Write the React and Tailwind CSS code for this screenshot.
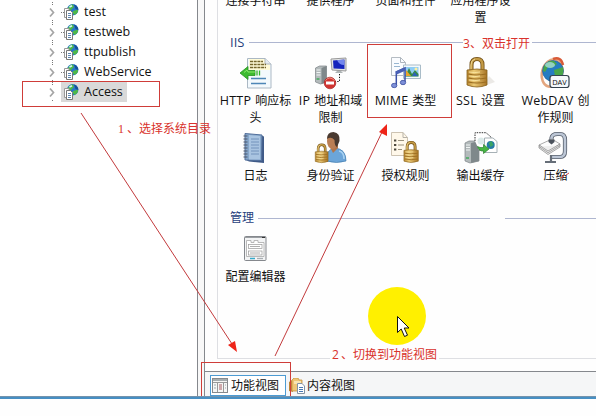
import React from "react";

function SiteIcon() {
  return (
    <svg width="16" height="16" viewBox="0 0 16 16" className="shrink-0">
      <circle cx="8.700" cy="5.700" r="5.700" fill="#2878c8" />
      <path d="M4 4Q6 0 9 .5L10 3L7 6L4 6ZM9 7L14 5.500Q14.500 9 10.500 11L9 9Z" fill="#4db848" />
      <path d="M10 .5Q14.500 2.500 14.300 6L11.500 5Z" fill="#164f96" />
      <path d="M5.500 3L8 1.800" stroke="#d6f2ff" strokeWidth="1.600" />
      <path d="M.5 4.500H5V13.500H.500Z" fill="#fff" stroke="#9a9a9a" />
      <path d="M2.500 6.500H6.500L8.500 8.500V15.500H2.500Z" fill="#fff" stroke="#777" />
      <path d="M4 9.500H7M4 11.500H7M4 13.500H7" stroke="#5f86b0" />
    </svg>
  );
}

function Gold({ x, y, s }) {
  return (
    <g transform={`translate(${x} ${y}) scale(${s})`}>
      <path d="M6.500 15V8Q6.500 2 12 2Q17.500 2 17.500 8V15" fill="none" stroke="#6f4d14" strokeWidth="4" />
      <path d="M6.500 15V8Q6.500 2 12 2Q17.500 2 17.500 8V15" fill="none" stroke="#c39a45" strokeWidth="2.400" />
      <path d="M6 14V8Q6 3 10 2" fill="none" stroke="#f0d78e" strokeWidth="1" />
      <path d="M2 13Q12 11 22 13V28Q12 32 2 28Z" fill="url(#gold)" stroke="#86601b" strokeWidth=".8" />
      <path d="M3 17Q12 19 21 17M3 21Q12 23 21 21M3 25Q12 27 21 25" fill="none" stroke="#9a6c20" strokeWidth="1.200" />
      <path d="M4 15Q10 16 15 15M4 19Q10 20 15 19M4 23Q10 24 15 23" fill="none" stroke="#fae5a0" strokeWidth="1" />
    </g>
  );
}

function Server({ x, y, w = 10, h = 20 }) {
  return (
    <g transform={`translate(${x} ${y})`}>
      <path d={`M0 2L4 0H${w}V${h - 2}L5 ${h}L0 ${h - 2}Z`} fill="#b3babb" stroke="#7c8386" strokeWidth=".7" />
      <path d={`M6 2L${w} 0V${h - 2}L6 ${h}Z`} fill="#7f888b" />
      <path d="M1 4H5M1 6.500H5M1 9H5" stroke="#f0f4f4" />
      <path d={`M1 ${h - 5}H4`} stroke="#43a95b" strokeWidth="1.500" />
    </g>
  );
}

const art = {
  http: (
    <>
      <path d="M7.500 1.500H25L31 7V31H7.500Z" fill="#f3f9fd" stroke="#abb8c4" />
      <path d="M9 2H24L30 8V13H9Z" fill="#fffbd8" />
      <path d="M25 1.500V7H31" fill="#e5ebf0" stroke="#aeb7be" />
      <path d="M10 4.500H23M10 7.500H26M10 10.500H26" stroke="#75662c" strokeWidth="1.400" strokeDasharray="3 .7" />
      <path d="M0 16L8 9.500V13.500H15V18.500H8V22.500Z" fill="#3dbb2f" stroke="#26911e" strokeWidth=".8" />
      <path d="M4 15.500L7 13L8 15H15" stroke="#8ae969" fill="none" />
      <path d="M17 13.500V18.500M19.500 13.500V18.500" stroke="#37b52c" strokeWidth="1.300" />
      <path d="M11 21.500H26M11 26.500H26" stroke="#4d86b7" strokeWidth="1.300" />
    </>
  ),
  ip: (
    <>
      <Server x={0.5} y={9} w={11} h={18} />
      <path d="M16 2L31 1V14L17 13Z" fill="#e3e5e5" stroke="#999" />
      <path d="M18 3.500L29.500 2.500V12L18.500 11.500Z" fill="#1424bd" />
      <path d="M22 3L29 3V8Q24 8 22 3Z" fill="#7286ed" />
      <path d="M22 14H26L28 16H20Z" fill="#aeb4b5" />
      <path d="M24.500 17V24.500H20" fill="none" stroke="#111" strokeDasharray="1.300 1.500" />
      <circle cx="15" cy="26" r="5.800" fill="#d13431" stroke="#a92826" strokeWidth=".7" />
      <path d="M10.500 23.500Q14.500 18.500 19.500 23.500" fill="none" stroke="#ee8c80" />
      <rect x="11" y="24.500" width="8" height="3" fill="#fff" />
    </>
  ),
  mime: (
    <>
      <path d="M1.500 .5H10.500L15.500 5.500V18.500H1.500Z" fill="#fafcff" stroke="#b5bcc3" />
      <path d="M10.500 .5V5.500H15.500" fill="none" stroke="#adb5bd" />
      <path d="M4 6.500H9M4 9.500H10" stroke="#98b6d1" />
      <path d="M13.500 8H30.500V21.500H13.500Z" fill="#f4f9fc" stroke="#a9bcc8" />
      <path d="M15 10H28.500V19.500H15Z" fill="#8fcdf5" />
      <path d="M15 19.500L19 11L22 17L25 13L28.500 17V19.500Z" fill="#378a45" />
      <path d="M22 19L24.500 15L28 19Z" fill="#2d63ba" />
      <path d="M16 13L21 19H16Z" fill="#e8a42c" />
      <circle cx="26" cy="12" r="1.500" fill="#fff0a0" />
      <path d="M6.300 28V15L15 11V25" fill="none" stroke="#3b50a8" strokeWidth="1.500" />
      <path d="M6 16L15 12" stroke="#4960b5" strokeWidth="3.200" />
      <ellipse cx="4.200" cy="28.500" rx="2.700" ry="2.200" fill="#7d8fd8" stroke="#3e50a0" strokeWidth=".8" />
      <ellipse cx="13" cy="25.500" rx="2.700" ry="2.200" fill="#7d8fd8" stroke="#3e50a0" strokeWidth=".8" />
    </>
  ),
  ssl: (
    <>
      <path d="M19 29L30 25L24 19Z" fill="#ebe9e6" />
      <Gold x={0} y={0} s={1} />
    </>
  ),
  dav: (
    <>
      <ellipse cx="12" cy="16" rx="10" ry="14" fill="none" stroke="#e3a67f" strokeWidth="2.500" transform="rotate(15 12 16)" />
      <path d="M13 2Q21 -1 23 8" fill="none" stroke="#d85a37" strokeWidth="2.500" />
      <circle cx="13" cy="14" r="10.500" fill="#257cc2" stroke="#165593" strokeWidth=".6" />
      <path d="M4 9Q8 3 14 4L17 7L12 11L8 10L5 15L3 14ZM14 13L23 10Q25 17 19 22L15 20Z" fill="#48a64a" />
      <ellipse cx="10" cy="8" rx="5" ry="3" fill="#bce8ff" opacity=".65" />
      <rect x="10" y="18.500" width="19" height="12" rx="2.500" fill="#f5f8fb" stroke="#34424f" strokeWidth="1.200" />
      <text x="19.500" y="27.500" textAnchor="middle" fontSize="7.500" fill="#111" className="font-['Open_Sans',sans-serif]">DAV</text>
    </>
  ),
  log: (
    <>
      <path d="M20 3L24 4.500V31L9 29.500L6 28Z" fill="#3f5a87" />
      <path d="M5 1.500L22 3L21.500 28.500L5 28Z" fill="#86a7cb" stroke="#526f9b" />
      <path d="M9 3L20 4L20 27.500H9Z" fill="#a9c4e1" />
      <path d="M11 7H19M11 10H19M11 13H19M11 16H19M11 19H19M11 22H19" stroke="#6d8fb9" strokeWidth=".9" />
      <path d="M3.500 4H7.500M3.500 7H7.500M3.500 10H7.500M3.500 13H7.500M3.500 16H7.500M3.500 19H7.500M3.500 22H7.500M3.500 25H7.500" stroke="#4d586c" strokeWidth="1.100" />
    </>
  ),
  auth: (
    <>
      <path d="M11 29Q10 18 20 16Q31 17 31 29Q22 32 11 29Z" fill="#6ba5d9" stroke="#447dae" strokeWidth=".7" />
      <path d="M15 15L18 21L23 16V12H15Z" fill="#b1754a" />
      <ellipse cx="17.500" cy="9" rx="5.500" ry="8" fill="#ba7e54" />
      <path d="M12 7Q12 0 18.500 0Q25.500 1 24.500 9L22 15Q19.500 14 19.500 8Q16 4 12 7Z" fill="#493a30" />
      <path d="M24 19Q29 20 29 27" fill="none" stroke="#a9d2f2" strokeWidth="1.500" />
      <Gold x={-1} y={11.500} s={0.64} />
    </>
  ),
  rule: (
    <>
      <path d="M1.500 .5H13L17.500 5.500V23.500H1.500Z" fill="#fff8ea" stroke="#cdc3b2" />
      <path d="M13 .5V5.500H17.500" fill="none" stroke="#b5b1a8" />
      <path d="M4 8.500H6.300M4 13H6.300M4 17.500H6.300" stroke="#4d483e" strokeWidth="2" />
      <path d="M8 8.500H14M8 13H14M8 17.500H12" stroke="#99907c" strokeWidth="1.200" />
      <Gold x={12.500} y={9} s={0.72} />
    </>
  ),
  cache: (
    <>
      <Server x={0} y={9} w={14} h={22} />
      <path d="M10 9V.7H21L26 5V18H14" fill="#fff" stroke="#333" strokeDasharray="1.500 1" />
      <circle cx="16" cy="9" r="3.500" fill="#dcebea" />
      <path d="M19.500 6H28L32 9.500V20.500H19.500Z" fill="#fff" stroke="#a7b1b6" />
      <circle cx="25.700" cy="13" r="4" fill="#257aa6" />
      <path d="M23.500 11L26.500 9L28.500 13L25.500 15Z" fill="#3aa463" />
      <path d="M12.500 14.500Q14.500 16 18.500 15.500V12.500L24 17L18.500 21.500V19Q14 19.500 12.500 14.500Z" fill="#46b643" stroke="#287e2c" strokeWidth=".7" />
    </>
  ),
  zip: (
    <>
      <path d="M11.500 9V6Q12 2 17.500 2H20Q25 2 25 8V19Q25 25 20 25H12" fill="none" stroke="#58606d" strokeWidth="4.200" />
      <path d="M11.500 9V6Q12 2 17.500 2H20Q25 2 25 8V19Q25 25 20 25H12" fill="none" stroke="#bcc6d5" strokeWidth="2.600" />
      <path d="M-1 13L12 7L20 12L8 19Z" fill="#fcfcfc" stroke="#888" strokeWidth=".7" />
      <path d="M-1 13V16L8 22.500L20 15V12L8 19ZM-1 14.500L8 20.700L20 13.500" fill="#eee" stroke="#858585" strokeWidth=".7" />
      <path d="M8.500 7.500H14.500V10L11.500 12.500L8.500 10Z" fill="#4c535d" />
      <path d="M11 23V29M5 30H16" stroke="#666e78" strokeWidth="2.200" />
    </>
  ),
  config: (
    <>
      <rect x="4.500" y="3.500" width="21.500" height="24" rx="1" fill="#f3f4f5" stroke="#85888d" />
      <path d="M5 4.500H26" stroke="#9a9ea2" />
      <path d="M22 4.500H25" stroke="#333" />
      <path d="M6.500 23.500V7.500H11V9.500H14V7.500H18V9.500H24V23.500Z" fill="#fff" stroke="#aaa" strokeWidth=".8" />
      <rect x="8.500" y="11.500" width="13.500" height="4" fill="#fff" stroke="#999" strokeWidth=".7" />
      <rect x="8.500" y="18" width="13.500" height="4" fill="#fff" stroke="#999" strokeWidth=".7" />
      <path d="M10 13.500H20M10 20H20" stroke="#999" strokeWidth=".8" />
      <path d="M10 25.500H15" stroke="#36aaca" strokeWidth="1.500" />
      <path d="M17 25.500H23" stroke="#a9afb3" strokeWidth="1.300" />
    </>
  ),
};

function Label({ latin, text }) {
  return (
    <div className="text-[12px] leading-[17px] whitespace-nowrap text-[#111]">
      {latin && <span className="mr-[4px] text-[12.500px] leading-[17px] tracking-[0.2px]">{latin}</span>}
      {text}
    </div>
  );
}

function Feature({ icon, latin, lines }) {
  return (
    <div className="flex w-[75px] shrink-0 flex-col items-center">
      <svg width="32" height="32" viewBox="0 0 32 32" className="overflow-visible">{art[icon]}</svg>
      <div className="mt-[3px] flex flex-col items-center">
        {lines.map((l, i) => <Label key={l} latin={i === 0 ? latin : null} text={l} />)}
      </div>
    </div>
  );
}

const sites = ["test", "testweb", "ttpublish", "WebService", "Access"];
const topLabels = [["连接字符串"], ["提供程序"], ["页面和控件"], ["应用程序设", "置"]];
const row1 = [
  { icon: "http", latin: "HTTP", lines: ["响应标", "头"] },
  { icon: "ip", latin: "IP", lines: ["地址和域", "限制"] },
  { icon: "mime", latin: "MIME", lines: ["类型"] },
  { icon: "ssl", latin: "SSL", lines: ["设置"] },
  { icon: "dav", latin: "WebDAV", lines: ["创", "作规则"] },
];
const row2 = [
  { icon: "log", lines: ["日志"] },
  { icon: "auth", lines: ["身份验证"] },
  { icon: "rule", lines: ["授权规则"] },
  { icon: "cache", lines: ["输出缓存"] },
  { icon: "zip", lines: ["压缩"] },
];

export default function App() {
  return (
    <div className="relative h-[416px] w-[596px] overflow-hidden bg-[#fefefe] font-['Open_Sans','Noto_Sans_CJK_SC',sans-serif] text-[#111]">
      <svg width="0" height="0" className="absolute">
        <defs>
          <linearGradient id="gold">
            <stop offset="0" stopColor="#b98731" />
            <stop offset=".35" stopColor="#eccb76" />
            <stop offset="1" stopColor="#a87425" />
          </linearGradient>
        </defs>
      </svg>
      <div className="flex h-[396px]">
        <aside className="w-[198px] shrink-0 border-r border-[#85888d] bg-white pt-[2px]">
          {sites.map((s) => (
            <div key={s} className="flex h-5 items-center pl-[48px]">
              <svg width="16" height="20" viewBox="0 0 16 20" className="shrink-0">
                <path d="M4.500 0V4M4.500 18V20M13 10.500H16" stroke="#777" strokeDasharray="1 1" />
                <path d="M2 6.500L5.500 10.500L2 14.500" fill="none" stroke="#a5a5a5" strokeWidth="1.700" />
              </svg>
              <div className={s === "Access" ? "-ml-[3px] flex h-5 items-center bg-[#d9d9d9] pr-[4px] pl-[3px]" : "flex h-5 items-center"}>
                <SiteIcon />
                <span className="ml-[4px] text-[12.500px] leading-5">{s}</span>
              </div>
            </div>
          ))}
        </aside>
        <div className="w-[6px] shrink-0 bg-[#f8f8f8]" />
        <main className="flex w-[392px] flex-col border-l border-[#85888d] bg-[#f5f6f7]">
          <section className="h-[372px] overflow-hidden border-b border-[#85888d] bg-[#fefefe] pl-[12px]">
            <div className="h-[359px] overflow-hidden border-b border-l border-[#dedfe3]">
              <div className="-mt-[8px] flex h-[42px]">
                {topLabels.map((t) => (
                  <div key={t[0]} className="w-[75px] text-center text-[12px] leading-[17px]">
                    {t.map((l) => <div key={l}>{l}</div>)}
                  </div>
                ))}
              </div>
              <div className="flex h-4 items-center gap-[5px] pl-[12px]">
                <span className="text-[13px] leading-4 text-[#263f7c]">IIS</span>
                <div className="h-px flex-1 bg-[#aeb6d0]" />
              </div>
              <div className="mt-[7px] flex h-[75px]">
                {row1.map((f) => <Feature key={f.icon} {...f} />)}
              </div>
              <div className="flex h-[78px]">
                {row2.map((f) => <Feature key={f.icon} {...f} />)}
              </div>
              <div className="flex h-4 items-center pl-[12px]">
                <span className="text-[12px] leading-4 text-[#263f7c]">管理</span>
                <div className="ml-[4px] h-px w-[232px] bg-[#aeb6d0]" />
                <div className="ml-[15px] h-px flex-1 bg-[#aeb6d0]" />
              </div>
              <div className="mt-[7px] flex">
                <Feature icon="config" lines={["配置编辑器"]} />
              </div>
            </div>
          </section>
          <nav className="flex h-6 items-end pl-[5px] text-[12px]">
            <div className="flex h-[21px] w-[76px] items-center border border-[#4d9bd3] bg-white pl-px">
              <svg width="16" height="16" viewBox="0 0 16 16" className="shrink-0">
                <rect x=".5" y=".5" width="15" height="14" fill="#f6f6f5" stroke="#85898d" />
                <path d="M1 2H15" stroke="#a6acaf" strokeWidth="2" />
                <path d="M1 4.500H15M5.500 4V14M11.500 4V14" stroke="#999" />
                <path d="M2 7H4M2 10H4M13 7H14M13 10H14" stroke="#9baab1" />
                <path d="M7 7H10M7 9H10M7 11H10" stroke="#a95c63" />
              </svg>
              <span className="ml-[3px] leading-[19px]">功能视图</span>
            </div>
            <div className="flex h-[21px] items-center pl-[3px]">
              <svg width="16" height="16" viewBox="0 0 16 16" className="shrink-0">
                <path d="M0 4L3 2L4 14L0 13Z" fill="#bd8435" />
                <path d="M3 2L5 0H9L10 2H13V13H3Z" fill="#edc676" stroke="#c69340" strokeWidth=".8" />
                <path d="M5 3H12V6H5Z" fill="#f9e4b1" />
                <path d="M8.500 5.500H13L15.500 8V15.500H8.500Z" fill="#fff" stroke="#8292a4" />
                <path d="M10 9.500H14M10 11.500H14M10 13.500H14" stroke="#4879b4" />
              </svg>
              <span className="ml-[2px] leading-[19px]">内容视图</span>
            </div>
          </nav>
        </main>
      </div>
      <div className="h-[3px] border-t border-[#7493ac] bg-[#478fc3]" />

      {/* tutorial annotations drawn over the window */}
      <div className="absolute top-[287px] left-[368px] h-[58px] w-[58px] rounded-full bg-[#fff000]" />
      <div className="absolute top-[81px] left-[22px] h-[26px] w-[138px] border border-[#cf3d39]" />
      <div className="absolute top-[44px] left-[367px] h-[74px] w-[85px] border border-[#cf3d39]" />
      <div className="absolute top-[362px] left-[201px] h-[34px] w-[90px] border border-b-0 border-[#cf3d39]" />
      <svg width="596" height="416" className="absolute top-0 left-0">
        <path d="M81 113L234 347M275 356L383 130" fill="none" stroke="#c23a3c" strokeWidth="1" />
        <path d="M237 352L228 345L235 341Z M387 124L379 132L387 136Z" fill="#ee2418" />
        <path d="M397.500 316.500V332.500L401.200 329L404.500 336.500L407.500 335.200L404.200 328H409Z" fill="#fff" stroke="#111" />
        <path d="M561 178L565 175M566 175L569 173" stroke="#d64040" />
      </svg>
      <div className="absolute top-[121px] left-[118px] flex text-[12px] leading-4 text-[#d9322c]">
        <span className="w-[9px] font-['Liberation_Serif',serif]">1</span>
        <span className="w-[12px]">、</span>
        <span>选择系统目录</span>
      </div>
      <div className="absolute top-[36px] left-[463px] flex bg-[#fefefe] pr-[2px] text-[12px] leading-4 text-[#d9322c]">
        <span className="w-[7px]">3</span>
        <span className="w-[12px]">、</span>
        <span>双击打开</span>
      </div>
      <div className="absolute top-[347px] left-[330px] flex bg-[#fefefe] pr-[2px] pl-[2px] text-[12px] leading-4 text-[#d9322c]">
        <span className="w-[9px]">2</span>
        <span className="w-[12px]">、</span>
        <span>切换到功能视图</span>
      </div>
    </div>
  );
}
